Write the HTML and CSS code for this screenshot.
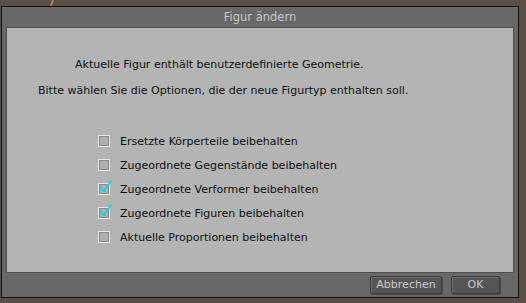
FILE: index.html
```html
<!DOCTYPE html>
<html lang="de">
<head>
<meta charset="utf-8">
<title>Figur ändern</title>
<link rel="stylesheet" href="styles.css">
</head>
<body>
<div class="mark"></div>
<div class="dialog">
  <div class="titlebar">Figur ändern</div>
  <div class="panel">
    <p class="msg msg1">Aktuelle Figur enthält benutzerdefinierte Geometrie.</p>
    <p class="msg msg2">Bitte wählen Sie die Optionen, die der neue Figurtyp enthalten soll.</p>
    <ul class="options">
      <li class="opt"><span class="box"></span>Ersetzte Körperteile beibehalten</li>
      <li class="opt"><span class="box"></span>Zugeordnete Gegenstände beibehalten</li>
      <li class="opt"><span class="box checked"><svg viewBox="0 0 14 14" width="14" height="14"><path d="M3 7.5 L6 11 L12.5 1.5" fill="none" stroke="#1ed2ea" stroke-width="2.2" stroke-linecap="round" stroke-linejoin="round"/></svg></span>Zugeordnete Verformer beibehalten</li>
      <li class="opt"><span class="box checked"><svg viewBox="0 0 14 14" width="14" height="14"><path d="M3 7.5 L6 11 L12.5 1.5" fill="none" stroke="#1ed2ea" stroke-width="2.2" stroke-linecap="round" stroke-linejoin="round"/></svg></span>Zugeordnete Figuren beibehalten</li>
      <li class="opt"><span class="box"></span>Aktuelle Proportionen beibehalten</li>
    </ul>
  </div>
  <div class="footer">
    <button class="btn btn-cancel">Abbrechen</button>
    <button class="btn btn-ok">OK</button>
  </div>
</div>
</body>
</html>
```
FILE: styles.css
```css
html, body {
  margin: 0;
  padding: 0;
  background: #5a5046;
  width: 526px;
  height: 303px;
  overflow: hidden;
  font-family: "DejaVu Sans", "Liberation Sans", sans-serif;
}
.mark {
  position: absolute;
  left: 51px;
  top: 0;
  width: 2px;
  height: 6px;
  background: #c08060;
  transform: skewX(-20deg);
}
.dialog {
  margin: 6px 0 0 1px;
  width: 516px;
  height: 290px;
  border: 1px solid #111;
  background: #686868;
  display: flex;
  flex-direction: column;
}
.titlebar {
  height: 20px;
  line-height: 20px;
  text-align: center;
  color: #c6c6c6;
  font-size: 11.5px;
}
.panel {
  margin: 0 4px;
  height: 244px;
  border: 1px solid #4e4e4e;
  background: #b4b4b4;
}
.msg {
  margin: 0;
  font-size: 11px;
  color: #101010;
  white-space: nowrap;
}
.msg1 { padding: 30px 0 0 68px; }
.msg2 { padding: 13px 0 0 31px; }
.options {
  list-style: none;
  margin: 0;
  padding: 32px 0 0 91px;
}
.opt {
  display: flex;
  align-items: center;
  height: 24px;
  font-size: 11px;
  color: #101010;
  white-space: nowrap;
}
.box {
  width: 10px;
  height: 10px;
  border: 1px solid #e6e6e6;
  box-shadow: inset 0 0 0 1px #8a8a8a;
  background: #b0b0b0;
  margin-right: 10px;
  position: relative;
}
.box svg {
  position: absolute;
  left: -1px;
  top: -4px;
}
.footer {
  flex: 1;
  display: flex;
  justify-content: flex-end;
  align-items: center;
  padding: 0 18px 1px 0;
  gap: 9px;
}
.btn {
  height: 18px;
  padding: 0;
  border: 1px solid #3c3c3c;
  border-radius: 2px;
  background: #565656;
  box-shadow: inset 1px 1px 0 #6e6e6e, 1px 1px 0 #4a4a4a;
  color: #c8c8c8;
  font-family: "DejaVu Sans", "Liberation Sans", sans-serif;
  font-size: 11px;
}
.btn-cancel { width: 72px; }
.btn-ok { width: 49px; }
```
